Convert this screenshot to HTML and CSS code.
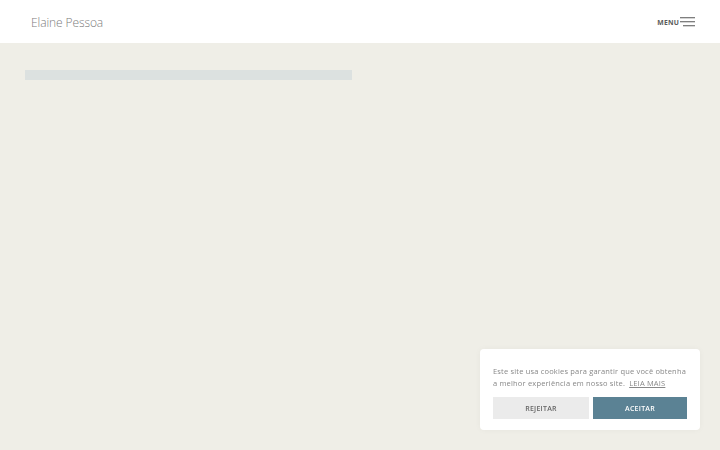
FILE: index.html
```html
<!DOCTYPE html>
<html lang="pt">
<head>
<meta charset="utf-8">
<link rel="stylesheet" href="styles.css">
</head>
<body>
<header class="site-header">
  <div class="logo">Elaine Pessoa</div>
  <button class="menu-btn">
    <span class="menu-label">MENU</span>
    <svg class="menu-icon" width="15" height="10" viewBox="0 0 15 10">
      <line x1="0" y1="0.75" x2="15" y2="0.75" stroke="#555" stroke-width="1"/>
      <line x1="0" y1="4.75" x2="15" y2="4.75" stroke="#555" stroke-width="1"/>
      <line x1="3" y1="8.75" x2="15" y2="8.75" stroke="#555" stroke-width="1"/>
    </svg>
  </button>
</header>
<main class="content">
  <div class="placeholder-bar"></div>
</main>
<div class="cookie">
  <p class="cookie-text">Este site usa cookies para garantir que você obtenha a melhor experiência em nosso site. <a href="#" class="cookie-link">LEIA MAIS</a></p>
  <div class="cookie-actions">
    <button class="btn btn-reject">REJEITAR</button>
    <button class="btn btn-accept">ACEITAR</button>
  </div>
</div>
</body>
</html>
```
FILE: styles.css
```css
html, body {
  margin: 0;
  padding: 0;
  height: 100%;
}
body {
  background: #efeee7;
  font-family: "Open Sans", "Noto Sans", sans-serif;
  overflow: hidden;
}
.site-header {
  height: 43px;
  background: #ffffff;
  display: flex;
  align-items: center;
  justify-content: space-between;
  padding: 0 25px 0 31px;
  box-sizing: border-box;
}
.logo {
  font-size: 12px;
  font-weight: 300;
  color: #7c7c7c;
  letter-spacing: -0.1px;
  margin-top: 1px;
}
.menu-btn {
  display: flex;
  align-items: center;
  gap: 1px;
  background: none;
  border: 0;
  padding: 0;
  font-family: inherit;
  cursor: pointer;
}
.menu-label {
  font-size: 6.8px;
  font-weight: 700;
  color: #5a5a5a;
  letter-spacing: 0.2px;
  margin-top: 2px;
}
.menu-icon {
  display: block;
}
.content {
  padding: 27px 25px 0;
}
.placeholder-bar {
  width: 327px;
  height: 10px;
  background: #dce1e0;
}
.cookie {
  position: fixed;
  left: 480px;
  top: 349px;
  width: 220px;
  box-sizing: border-box;
  background: #fff;
  border-radius: 4px;
  box-shadow: 0 0 6px rgba(0, 0, 0, 0.04);
  padding: 16px 13px 11px 13px;
}
.cookie-text {
  margin: 0 0 8px;
  font-size: 7.5px;
  line-height: 12px;
  color: #888;
  letter-spacing: 0.18px;
}
.cookie-link {
  color: #888;
  text-decoration: underline;
  margin-left: 2px;
}
.cookie-actions {
  display: flex;
  gap: 4px;
}
.btn {
  height: 22px;
  border: 0;
  font-family: inherit;
  font-size: 7px;
  font-weight: 600;
  letter-spacing: 0.25px;
  cursor: pointer;
}
.btn-reject {
  width: 96px;
  background: #ebebeb;
  color: #666;
}
.btn-accept {
  width: 94px;
  background: #5b8294;
  color: #fff;
}
```
